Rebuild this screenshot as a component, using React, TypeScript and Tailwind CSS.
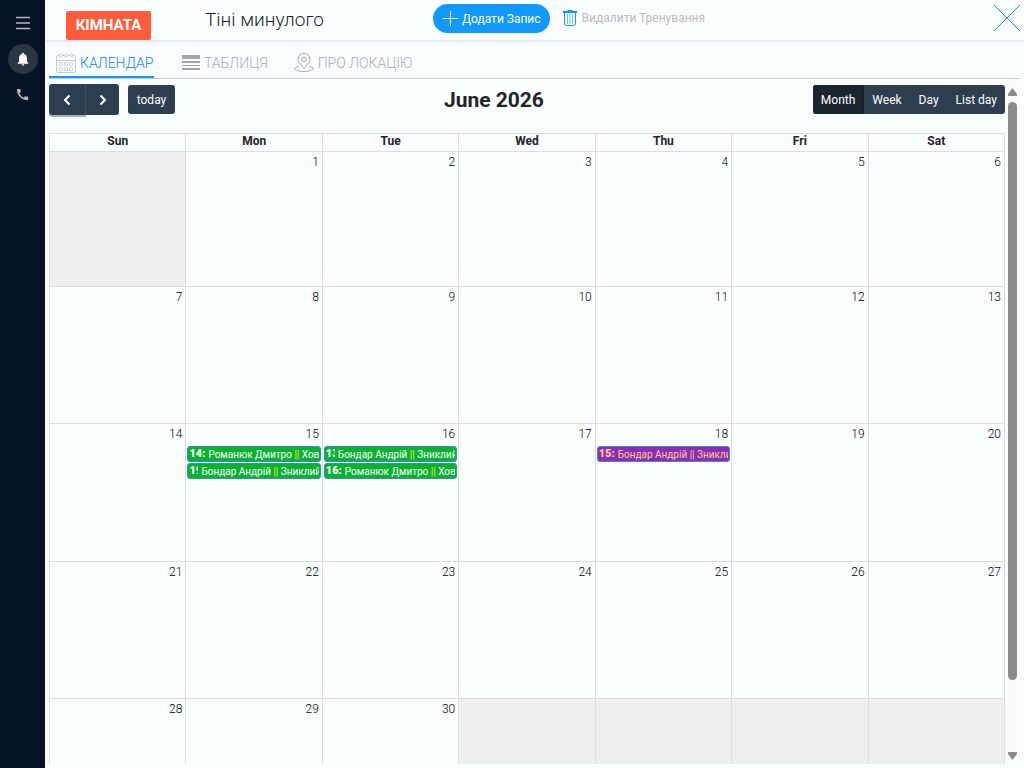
import React from "react";

type CalendarEvent = {
  time: string;
  name: string;
  place: string;
  timeWidth: string;
  tone: "green" | "purple";
};

const days = ["Sun", "Mon", "Tue", "Wed", "Thu", "Fri", "Sat"];

const weeks: { height: string; dates: (number | null)[] }[] = [
  { height: "h-[135px]", dates: [null, 1, 2, 3, 4, 5, 6] },
  { height: "h-[137px]", dates: [7, 8, 9, 10, 11, 12, 13] },
  { height: "h-[138px]", dates: [14, 15, 16, 17, 18, 19, 20] },
  { height: "h-[137px]", dates: [21, 22, 23, 24, 25, 26, 27] },
  { height: "h-[137px]", dates: [28, 29, 30, null, null, null, null] },
];

const events: Record<number, CalendarEvent[]> = {
  15: [
    { time: "14:20", name: "Романюк Дмитро", place: "Ховрах", timeWidth: "w-4", tone: "green" },
    { time: "19:00", name: "Бондар Андрій", place: "Зниклий", timeWidth: "w-[9px]", tone: "green" },
  ],
  16: [
    { time: "13:00", name: "Бондар Андрій", place: "Зниклий", timeWidth: "w-[9px]", tone: "green" },
    { time: "16:20", name: "Романюк Дмитро", place: "Ховрах", timeWidth: "w-4", tone: "green" },
  ],
  18: [
    { time: "15:40", name: "Бондар Андрій", place: "Зниклий", timeWidth: "w-4", tone: "purple" },
  ],
};

function Sidebar() {
  return (
    <nav className="relative z-20 flex w-[45px] shrink-0 flex-col items-center bg-[#051327] pt-2">
      <button aria-label="Menu" className="flex size-[30px] items-center justify-center">
        <svg width="14" height="14" viewBox="0 0 14 14" stroke="#b4b8be" fill="none">
          <path d="M0 1.500h14M0 7h14M0 12.500h14" strokeWidth="1.400" />
        </svg>
      </button>
      <button
        aria-label="Notifications"
        className="mt-1.5 flex size-[30px] items-center justify-center rounded-full bg-[#2b3645]"
      >
        <svg width="16" height="16" viewBox="0 0 24 24" fill="#fff">
          <path d="M12 22c1.100 0 2-.9 2-2h-4c0 1.100.9 2 2 2zm6-6v-5c0-3.070-1.640-5.640-4.500-6.320V4c0-.83-.67-1.500-1.500-1.500s-1.500.67-1.500 1.500v.68C7.630 5.360 6 7.920 6 11v5l-2 2v1h16v-1l-2-2z" />
        </svg>
      </button>
      <button aria-label="Calls" className="mt-1.5 flex h-7 w-[30px] items-center justify-center">
        <svg width="15" height="15" viewBox="0 0 24 24" fill="#b4b8be">
          <path d="M20.010 15.380c-1.230 0-2.420-.2-3.530-.56a.977.977 0 0 0-1.010.24l-1.570 1.970c-2.830-1.350-5.480-3.900-6.890-6.830l1.950-1.660c.27-.28.35-.67.24-1.020-.37-1.110-.56-2.300-.56-3.530 0-.54-.45-.99-.99-.99H4.190C3.650 3 3 3.240 3 3.990 3 13.280 10.730 21 20.010 21c.71 0 .99-.63.99-1.180v-3.450c0-.54-.45-.99-.99-.99z" />
        </svg>
      </button>
    </nav>
  );
}

function Header() {
  return (
    <header className="z-10 flex h-[41px] shrink-0 items-start border-b border-[#e4e6f0] pl-[21px] shadow-[0_1px_4px_#e4e6f0]">
      <span className="mt-[11px] flex h-[29px] w-[85px] items-center justify-center rounded-xs bg-[#ff5c3c] text-[15px] font-bold text-white">
        КІМНАТА
      </span>
      <h1 className="mt-2 ml-[54px] w-[228px] text-[19px] leading-6 font-light text-[#212529]">
        Тіні минулого
      </h1>
      <button className="mt-1 flex h-[29px] items-center gap-1 rounded-full bg-[#1199ff] pr-[9px] pl-2.5 text-xs text-white">
        <svg width="15" height="15" viewBox="0 0 15 15" stroke="#fff">
          <path d="M7.500 0v15M0 7.500h15" />
        </svg>
        Додати Запис
      </button>
      <button className="mt-1 ml-3 flex h-7 items-center gap-1 text-xs text-[#bcbcbc]">
        <svg width="16" height="18" viewBox="0 0 16 18" fill="none" stroke="#1199ff">
          <path d="M1 3h14" strokeWidth="2" />
          <path d="M5.500 1.500h5M2.500 3.500v11q0 2 2 2h7q2 0 2-2v-11" />
          <path d="M5.500 5v10M8 5v10M10.500 5v10" strokeOpacity=".6" />
        </svg>
        Видалити Тренування
      </button>
      <button aria-label="Close" className="mt-1 mr-[3px] ml-auto">
        <svg width="28" height="28" viewBox="0 0 28 28" stroke="#1199ff">
          <path d="M1 1l26 26M27 1L1 27" />
        </svg>
      </button>
    </header>
  );
}

function CalendarIcon() {
  return (
    <svg width="20" height="20" viewBox="0 0 20 20" fill="none" stroke="#bdbfc2" strokeWidth="0.8">
      <path d="M3 2.500H2q-1.500 0-1.500 1.500v14q0 1.500 1.500 1.500h16q1.500 0 1.500-1.500V4q0-1.500-1.500-1.500h-1M6 2.500h2M12 2.500h2M.5 7.500h19" />
      <circle cx="4.500" cy="2.500" r="1.500" />
      <circle cx="10" cy="2.500" r="1.500" />
      <circle cx="15.500" cy="2.500" r="1.500" />
      <rect x="8.500" y="9.500" width="3" height="3" rx="1" />
      <rect x="13.500" y="9.500" width="3" height="3" rx="1" />
      <rect x="3.500" y="9.500" width="3" height="3" rx="1" />
      <rect x="3.500" y="14.500" width="3" height="3" rx="1" />
      <rect x="8.500" y="14.500" width="3" height="3" rx="1" />
      <rect x="13.500" y="14.500" width="3" height="3" rx="1" />
    </svg>
  );
}

function TableIcon() {
  return (
    <svg width="18" height="15" viewBox="0 0 18 15" fill="#a3a5ac">
      <path d="M0 0h18v4H0zM0 6h18v2H0zM0 10h18v1H0zM0 13h18v2H0z" />
    </svg>
  );
}

function LocationIcon() {
  return (
    <svg width="20" height="19" viewBox="0 0 20 19" fill="none" stroke="#96999e" strokeWidth="0.9">
      <path d="M10 15.500C7.500 12 4 9.500 4 6.300a6 6 0 0 1 12 0c0 3.200-3.500 5.700-6 9.200z" />
      <circle cx="10" cy="6.500" r="2.300" />
      <path d="M4.500 13.500C2 14 .7 14.700.7 15.700c0 1.600 4 2.700 9.300 2.700s9.300-1.100 9.300-2.700c0-1-1.300-1.700-3.800-2.200" />
    </svg>
  );
}

function Tabs() {
  return (
    <div className="mx-1 flex h-[38px] shrink-0 items-stretch border-b border-[#c8cbce] text-sm font-light text-[#aaacaf]">
      <button className="flex w-[105px] items-center gap-1 border-b-2 border-[#1199ff] pt-2 pl-[7px] text-[#0b8de0]">
        <CalendarIcon />
        КАЛЕНДАР
      </button>
      <button className="ml-7 flex items-center gap-1 pt-1.5">
        <TableIcon />
        ТАБЛИЦЯ
      </button>
      <button className="ml-[26px] flex items-center gap-1 pt-1.5">
        <LocationIcon />
        ПРО ЛОКАЦІЮ
      </button>
    </div>
  );
}

function Toolbar() {
  return (
    <div className="flex h-[54px] items-start justify-between text-xs text-white">
      <div className="flex items-start">
        <div className="mt-[5px] flex h-[31px] rounded-[3px] bg-[#2c3e50]">
          <button
            aria-label="Previous month"
            className="flex w-[37px] items-center justify-center rounded-l-[3px] border-r border-[#43515f] shadow-[0_2px_0_#a5adb5]"
          >
            <svg width="8" height="12" viewBox="0 0 8 12" fill="none" stroke="#fff" strokeWidth="2">
              <path d="M6.500 1.500L2 6l4.500 4.500" />
            </svg>
          </button>
          <button aria-label="Next month" className="flex w-[33px] items-center justify-center">
            <svg width="8" height="12" viewBox="0 0 8 12" fill="none" stroke="#fff" strokeWidth="2">
              <path d="M1.500 1.500L6 6l-4.500 4.500" />
            </svg>
          </button>
        </div>
        <button className="mt-1.5 ml-[9px] h-[29px] w-[47px] rounded-[3px] bg-[#2c3e50]">today</button>
      </div>
      <h2 className="mt-2 text-[21px] leading-[26px] font-bold text-[#212529]">June 2026</h2>
      <div className="mt-1.5 flex h-[29px] overflow-hidden rounded-[3px] bg-[#2c3e50]">
        <button className="border-r border-[#151e27] bg-[#1a252f] px-2">Month</button>
        <button className="px-2">Week</button>
        <button className="px-[9px]">Day</button>
        <button className="px-2">List day</button>
      </div>
    </div>
  );
}

function EventItem({ event }: { event: CalendarEvent }) {
  const green = event.tone === "green";
  return (
    <a
      href="#"
      className={
        green
          ? "flex h-4 items-center gap-[3px] overflow-hidden rounded-[3px] border border-[#3788d8] bg-[#0ab32d] px-px text-[10px] whitespace-nowrap text-white"
          : "flex h-4 items-center gap-[3px] overflow-hidden rounded-[3px] border border-[#3788d8] bg-[#8e2db4] px-px text-[10px] whitespace-nowrap text-[#fbcf8b]"
      }
    >
      <span className={`${event.timeWidth} shrink-0 overflow-hidden text-[11px] font-black`}>{event.time}</span>
      <span className="overflow-hidden">
        {event.name} <span className={green ? "text-[#f5e83c]" : ""}>||</span> {event.place}
      </span>
    </a>
  );
}

function MonthGrid() {
  return (
    <table className="w-full table-fixed border-collapse text-[#212529]">
      <thead>
        <tr className="h-[18px]">
          {days.map((day) => (
            <th key={day} className="border border-[#dddddd] p-0 pb-0.5 text-xs leading-[15px] font-bold">
              {day}
            </th>
          ))}
        </tr>
      </thead>
      <tbody>
        {weeks.map((week, i) => (
          <tr key={i} className={week.height}>
            {week.dates.map((date, j) => (
              <td
                key={j}
                className={
                  date
                    ? "border border-[#dddddd] p-0 align-top"
                    : "border border-[#dddddd] bg-[#eeefee] p-0 align-top"
                }
              >
                {date && (
                  <div className="px-[3px] pt-px text-right text-xs leading-[18px] font-light text-black">{date}</div>
                )}
                {date && events[date] && (
                  <div className="mx-px mt-[3px] flex flex-col gap-px">
                    {events[date].map((event) => (
                      <EventItem key={event.time} event={event} />
                    ))}
                  </div>
                )}
              </td>
            ))}
          </tr>
        ))}
      </tbody>
    </table>
  );
}

function Scrollbar() {
  return (
    <div className="flex w-[15px] shrink-0 flex-col items-center bg-[#fcfcfc] pt-[9px] pb-1" aria-hidden="true">
      <svg width="9" height="8" viewBox="0 0 9 8" fill="#8b8b8b">
        <path d="M4.500 0L9 6v2H0V6z" />
      </svg>
      <div className="mt-1.5 h-[578px] w-[9px] rounded-full bg-[#8b8b8b]" />
      <svg className="mt-auto" width="9" height="8" viewBox="0 0 9 8" fill="#8b8b8b">
        <path d="M4.500 8L9 2V0H0v2z" />
      </svg>
    </div>
  );
}

export default function App() {
  return (
    <div className="flex h-screen overflow-hidden bg-[#fafeff] font-['Roboto',sans-serif]">
      <Sidebar />
      <main className="flex min-w-0 flex-1 flex-col">
        <Header />
        <Tabs />
        <div className="mb-1 ml-1 flex min-h-0 flex-1">
          <div className="min-w-0 flex-1 overflow-hidden">
            <Toolbar />
            <MonthGrid />
          </div>
          <Scrollbar />
          <div className="w-1 shrink-0" />
        </div>
      </main>
    </div>
  );
}
